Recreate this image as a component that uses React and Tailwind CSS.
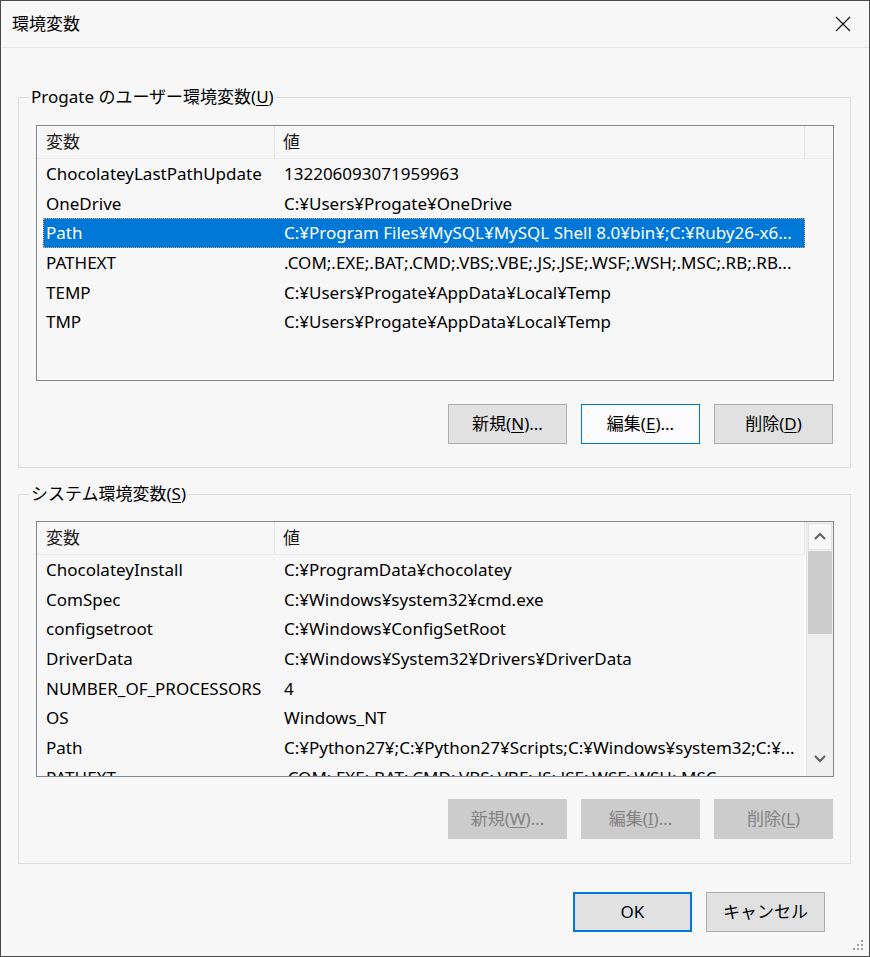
import React from 'react';

const font = { fontFamily: '"Noto Sans", "Noto Sans CJK JP", sans-serif' };

const userVars = [
  { name: 'ChocolateyLastPathUpdate', value: '132206093071959963' },
  { name: 'OneDrive', value: 'C:¥Users¥Progate¥OneDrive' },
  { name: 'Path', value: 'C:¥Program Files¥MySQL¥MySQL Shell 8.0¥bin¥;C:¥Ruby26-x6...', selected: true },
  { name: 'PATHEXT', value: '.COM;.EXE;.BAT;.CMD;.VBS;.VBE;.JS;.JSE;.WSF;.WSH;.MSC;.RB;.RB...' },
  { name: 'TEMP', value: 'C:¥Users¥Progate¥AppData¥Local¥Temp' },
  { name: 'TMP', value: 'C:¥Users¥Progate¥AppData¥Local¥Temp' },
];

const systemVars = [
  { name: 'ChocolateyInstall', value: 'C:¥ProgramData¥chocolatey' },
  { name: 'ComSpec', value: 'C:¥Windows¥system32¥cmd.exe' },
  { name: 'configsetroot', value: 'C:¥Windows¥ConfigSetRoot' },
  { name: 'DriverData', value: 'C:¥Windows¥System32¥Drivers¥DriverData' },
  { name: 'NUMBER_OF_PROCESSORS', value: '4' },
  { name: 'OS', value: 'Windows_NT' },
  { name: 'Path', value: 'C:¥Python27¥;C:¥Python27¥Scripts;C:¥Windows¥system32;C:¥...' },
  { name: 'PATHEXT', value: '.COM;.EXE;.BAT;.CMD;.VBS;.VBE;.JS;.JSE;.WSF;.WSH;.MSC' },
];

// ボタン (normal / focus / default / disabled)
const Btn = ({ label, accel, rest, variant = 'normal' }) => {
  const styles = {
    normal: 'bg-[#e1e1e1] border border-[#adadad] text-black',
    focus: 'bg-[#fbfbfb] border border-[#0078d7] text-black',
    default: 'bg-[#e1e1e1] border-2 border-[#0078d7] text-black',
    disabled: 'bg-[#cccccc] border border-[#cccccc] text-[#838383]',
  };
  return (
    <button className={`w-[119px] h-[40px] flex items-center justify-center text-[17px] ${styles[variant]}`}>
      {label}
      {accel && (
        <>
          (<span className="underline underline-offset-2">{accel}</span>)
        </>
      )}
      {rest}
    </button>
  );
};

const Row = ({ item }) => (
  <div className="flex h-[29.67px] items-center text-[17px] text-black whitespace-nowrap">
    <div
      className={`flex h-full items-center ml-[6px] w-[762px] ${
        item.selected ? 'bg-[#0078d7] text-white outline outline-1 outline-dotted outline-[#e8a15a] -outline-offset-1' : ''
      }`}
    >
      <div className="w-[238px] pl-[3px] overflow-hidden">{item.name}</div>
      <div className="flex-1 pl-[3px] overflow-hidden">{item.value}</div>
    </div>
  </div>
);

const Header = () => (
  <div className="flex h-[33px] items-center text-[17px] text-[#1a1a1a] border-b border-[#ececec]">
    <div className="w-[238px] h-full flex items-center pl-[9px] border-r border-[#e5e5e5]">変数</div>
    <div className="w-[530px] h-full flex items-center pl-[8px] border-r border-[#e5e5e5]">値</div>
  </div>
);

const Chevron = ({ up }) => (
  <svg width="14" height="10" viewBox="0 0 14 10">
    <path d={up ? 'M2 7 L7 2 L12 7' : 'M2 3 L7 8 L12 3'} fill="none" stroke="#606060" strokeWidth="2" />
  </svg>
);

const ListBox = ({ items, scroll }) => (
  <div className="flex h-[256px] border border-[#828790] bg-[#f7f7f7] overflow-hidden">
    <div className="flex-1 overflow-hidden">
      <Header />
      {items.map((it, i) => (
        <Row key={i} item={it} />
      ))}
    </div>
    {scroll && (
      <div className="w-[27px] flex flex-col bg-[#f0f0f0] border-l border-[#e6e6e6]">
        <div className="h-[27px] flex items-center justify-center border border-[#e3e3e3] bg-[#f7f7f7] m-[1px]">
          <Chevron up />
        </div>
        <div className="h-[83px] bg-[#cdcdcd] mx-[1px]" />
        <div className="flex-1" />
        <div className="h-[27px] flex items-center justify-center mb-[5px]">
          <Chevron />
        </div>
      </div>
    )}
  </div>
);

const Group = ({ title, accel, children, className }) => (
  <fieldset className={`ml-[17px] mr-[18px] border border-[#dcdcdc] pl-[17px] pr-[16px] ${className}`}>
    <legend className="ml-[-7px] px-[2px] text-[17px] leading-[24px] text-black">
      {title}(<span className="underline underline-offset-2">{accel}</span>)
    </legend>
    {children}
  </fieldset>
);

export default function App() {
  return (
    <div className="relative w-[870px] h-[957px] bg-[#f7f7f7] border border-[#4a4a4a] flex flex-col" style={font}>
      <div className="h-[47px] shrink-0 flex items-center justify-between pl-[11px] pr-[18px] border-b border-[#e4e4e4]">
        <span className="text-[17px] text-black">環境変数</span>
        <svg width="16" height="16" viewBox="0 0 16 16">
          <path d="M1 1 L15 15 M15 1 L1 15" stroke="#111" strokeWidth="1.2" />
        </svg>
      </div>

      <Group title="Progate のユーザー環境変数" accel="U" className="mt-[37px] pb-[23px]">
        <div className="mt-[16px]">
          <ListBox items={userVars} />
        </div>
        <div className="flex justify-end gap-[14px] mt-[23px] pr-[1px]">
          <Btn label="新規" accel="N" rest="..." />
          <Btn label="編集" accel="E" rest="..." variant="focus" />
          <Btn label="削除" accel="D" />
        </div>
      </Group>

      <Group title="システム環境変数" accel="S" className="mt-[14px] pb-[24px]">
        <div className="mt-[15px]">
          <ListBox items={systemVars} scroll />
        </div>
        <div className="flex justify-end gap-[14px] mt-[22px] pr-[1px]">
          <Btn label="新規" accel="W" rest="..." variant="disabled" />
          <Btn label="編集" accel="I" rest="..." variant="disabled" />
          <Btn label="削除" accel="L" variant="disabled" />
        </div>
      </Group>

      <div className="flex justify-end gap-[14px] mt-[28px] pr-[44px]">
        <Btn label="OK" variant="default" />
        <Btn label="キャンセル" />
      </div>

      {/* resize grip */}
      <svg className="absolute right-[4px] bottom-[4px]" width="14" height="14" viewBox="0 0 14 14">
        {[[10, 2], [6, 6], [10, 6], [2, 10], [6, 10], [10, 10]].map(([x, y], i) => (
          <rect key={i} x={x} y={y} width="2" height="2" fill="#a0a0a0" />
        ))}
      </svg>
    </div>
  );
}
